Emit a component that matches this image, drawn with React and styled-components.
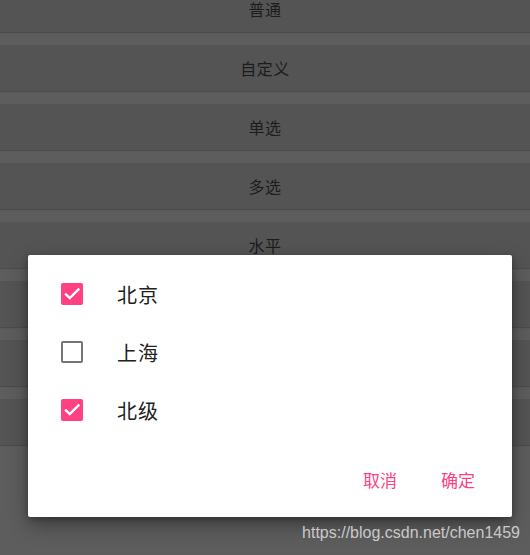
import React from "react";
import styled, { createGlobalStyle } from "styled-components";

// ------------------------ STYLES ------------------------

const GlobalStyle = createGlobalStyle`
  html, body {
    margin: 0;
    padding: 0;
    background: #5d5d5d;
  }
  * {
    box-sizing: border-box;
  }
`;

const Screen = styled.div`
  position: relative;
  width: 530px;
  height: 555px;
  overflow: hidden;
  background: #5d5d5d;
  font-family: "Noto Sans CJK SC", "Noto Sans", sans-serif;
`;

const ButtonList = styled.div`
  display: flex;
  flex-direction: column;
  gap: 13px;
  margin-top: -14px;
`;

const PageButton = styled.div`
  height: 46px;
  background: #545454;
  box-shadow: 0 1px 1px rgba(0, 0, 0, 0.18);
  display: flex;
  align-items: center;
  justify-content: center;
  font-size: 16px;
  color: #1c1c1c;
  letter-spacing: 0.5px;
`;

const Dialog = styled.div`
  position: absolute;
  left: 28px;
  top: 255px;
  width: 484px;
  height: 262px;
  background: #ffffff;
  border-radius: 2px;
  box-shadow: 0 8px 20px rgba(0, 0, 0, 0.35), 0 2px 6px rgba(0, 0, 0, 0.25);
  display: flex;
  flex-direction: column;
`;

const OptionList = styled.div`
  padding-top: 10px;
  display: flex;
  flex-direction: column;
`;

const OptionRow = styled.div`
  height: 58px;
  display: flex;
  align-items: center;
  padding-left: 33px;
  gap: 34px;
`;

const Box = styled.div`
  width: 22px;
  height: 22px;
  border-radius: 2px;
  display: flex;
  align-items: center;
  justify-content: center;
  background: ${(p) => (p.checked ? "#ff4081" : "transparent")};
  border: ${(p) => (p.checked ? "none" : "2.5px solid #757575")};
`;

const OptionLabel = styled.span`
  font-size: 20px;
  color: #212121;
  letter-spacing: 1px;
`;

const Actions = styled.div`
  margin-top: 23px;
  height: 36px;
  display: flex;
  justify-content: flex-end;
  align-items: center;
  gap: 20px;
  padding-right: 25px;
`;

const ActionButton = styled.div`
  padding: 0 12px;
  font-size: 17px;
  color: #ff4081;
  line-height: 36px;
`;

const Watermark = styled.div`
  position: absolute;
  right: 10px;
  top: 524px;
  font-family: "Liberation Sans", Arial, sans-serif;
  font-size: 16px;
  color: #c9c9c9;
`;

// ------------------------ DATA ------------------------

const pageButtons = ["普通", "自定义", "单选", "多选", "水平", "", "", ""];

const options = [
  { label: "北京", checked: true },
  { label: "上海", checked: false },
  { label: "北级", checked: true },
];

// ------------------------ COMPONENT ------------------------

const Check = () => (
  <svg width="18" height="18" viewBox="0 0 24 24">
    <path
      d="M4 12.5l5 5L20.5 6"
      fill="none"
      stroke="#fff"
      strokeWidth="3.2"
      strokeLinecap="square"
    />
  </svg>
);

const App = () => (
  <Screen>
    <GlobalStyle />
    <ButtonList>
      {pageButtons.map((t, i) => (
        <PageButton key={i}>{t}</PageButton>
      ))}
    </ButtonList>

    <Dialog>
      <OptionList>
        {options.map((o) => (
          <OptionRow key={o.label}>
            <Box checked={o.checked}>{o.checked && <Check />}</Box>
            <OptionLabel>{o.label}</OptionLabel>
          </OptionRow>
        ))}
      </OptionList>
      <Actions>
        <ActionButton>取消</ActionButton>
        <ActionButton>确定</ActionButton>
      </Actions>
    </Dialog>

    <Watermark>https://blog.csdn.net/chen1459</Watermark>
  </Screen>
);

export default App;
